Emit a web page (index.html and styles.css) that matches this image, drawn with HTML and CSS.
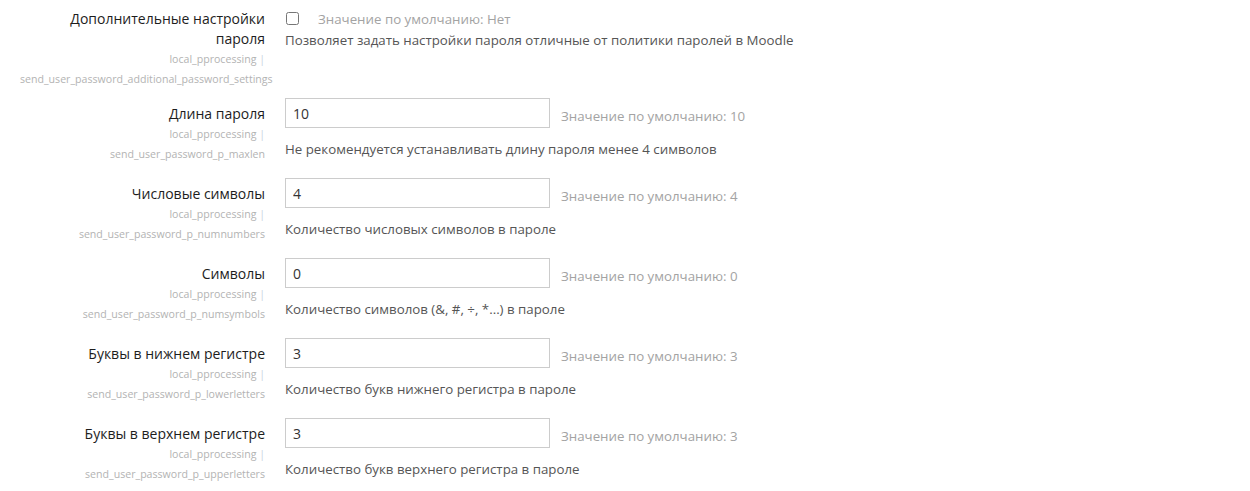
FILE: index.html
```html
<!DOCTYPE html>
<html>
<head>
    <meta charset="utf-8">
    <title>Настройки пароля</title>
    <link rel="stylesheet" href="styles.css">
</head>
<body>
    <div class="settings">

        <div class="form-item form-item-check">
            <div class="form-label">
                <label for="additional">Дополнительные настройки пароля</label>
                <span class="form-shortname">local_pprocessing <span class="sep">|</span> send_user_password_additional_password_settings</span>
            </div>
            <div class="form-setting">
                <div class="form-line">
                    <input type="checkbox" id="additional">
                    <span class="form-defaultinfo check-default">Значение по умолчанию: Нет</span>
                </div>
                <div class="form-description">Позволяет задать настройки пароля отличные от политики паролей в Moodle</div>
            </div>
        </div>

        <div class="form-item">
            <div class="form-label">
                <label for="maxlen">Длина пароля</label>
                <span class="form-shortname">local_pprocessing <span class="sep">|</span> send_user_password_p_maxlen</span>
            </div>
            <div class="form-setting">
                <div class="form-line">
                    <input type="text" id="maxlen" value="10">
                    <span class="form-defaultinfo">Значение по умолчанию: 10</span>
                </div>
                <div class="form-description">Не рекомендуется устанавливать длину пароля менее 4 символов</div>
            </div>
        </div>

        <div class="form-item">
            <div class="form-label">
                <label for="numnumbers">Числовые символы</label>
                <span class="form-shortname">local_pprocessing <span class="sep">|</span> send_user_password_p_numnumbers</span>
            </div>
            <div class="form-setting">
                <div class="form-line">
                    <input type="text" id="numnumbers" value="4">
                    <span class="form-defaultinfo">Значение по умолчанию: 4</span>
                </div>
                <div class="form-description">Количество числовых символов в пароле</div>
            </div>
        </div>

        <div class="form-item">
            <div class="form-label">
                <label for="numsymbols">Символы</label>
                <span class="form-shortname">local_pprocessing <span class="sep">|</span> send_user_password_p_numsymbols</span>
            </div>
            <div class="form-setting">
                <div class="form-line">
                    <input type="text" id="numsymbols" value="0">
                    <span class="form-defaultinfo">Значение по умолчанию: 0</span>
                </div>
                <div class="form-description">Количество символов (&amp;, #, ÷, *...) в пароле</div>
            </div>
        </div>

        <div class="form-item">
            <div class="form-label">
                <label for="lowerletters">Буквы в нижнем регистре</label>
                <span class="form-shortname">local_pprocessing <span class="sep">|</span> send_user_password_p_lowerletters</span>
            </div>
            <div class="form-setting">
                <div class="form-line">
                    <input type="text" id="lowerletters" value="3">
                    <span class="form-defaultinfo">Значение по умолчанию: 3</span>
                </div>
                <div class="form-description">Количество букв нижнего регистра в пароле</div>
            </div>
        </div>

        <div class="form-item">
            <div class="form-label">
                <label for="upperletters">Буквы в верхнем регистре</label>
                <span class="form-shortname">local_pprocessing <span class="sep">|</span> send_user_password_p_upperletters</span>
            </div>
            <div class="form-setting">
                <div class="form-line">
                    <input type="text" id="upperletters" value="3">
                    <span class="form-defaultinfo">Значение по умолчанию: 3</span>
                </div>
                <div class="form-description">Количество букв верхнего регистра в пароле</div>
            </div>
        </div>

    </div>
</body>
</html>
```

FILE: styles.css
```css
body {
    margin: 0;
    font-family: "Open Sans", "Liberation Sans", sans-serif;
    font-size: 14px;
    line-height: 20px;
    color: #333;
    background: #fff;
}
.settings {
    padding-top: 9px;
}
.form-item {
    display: grid;
    grid-template-columns: 245px 1fr;
    column-gap: 20px;
    padding-left: 20px;
    min-height: 80px;
}
.form-item-check {
    min-height: 89px;
}
.form-label {
    text-align: right;
    padding-top: 6px;
}
.form-item-check .form-label {
    padding-top: 0;
}
.form-label label {
    display: block;
    color: #1d1d1d;
}
.form-shortname {
    display: block;
    font-size: 10.6px;
    line-height: 20px;
    color: #b3b3b3;
}
.form-shortname .sep {
    color: #c9d3e0;
}
.form-line {
    display: flex;
    align-items: flex-start;
}
input[type="text"] {
    box-sizing: border-box;
    width: 265px;
    height: 30px;
    padding: 4px 7px;
    border: 1px solid #ccc;
    border-radius: 0;
    font-family: inherit;
    font-size: 14px;
    color: #333;
}
input[type="checkbox"] {
    width: 13px;
    height: 13px;
    margin: 3px 19px 0 1px;
}
.form-defaultinfo {
    font-size: 13.3px;
    color: #a3a3a3;
    margin-left: 11px;
    padding-top: 8px;
}
.check-default {
    margin-left: 0;
    padding-top: 0;
}
.form-description {
    font-size: 13.3px;
    color: #555;
    margin-top: 11px;
}
.form-item-check .form-description {
    margin-top: 1px;
}
```
